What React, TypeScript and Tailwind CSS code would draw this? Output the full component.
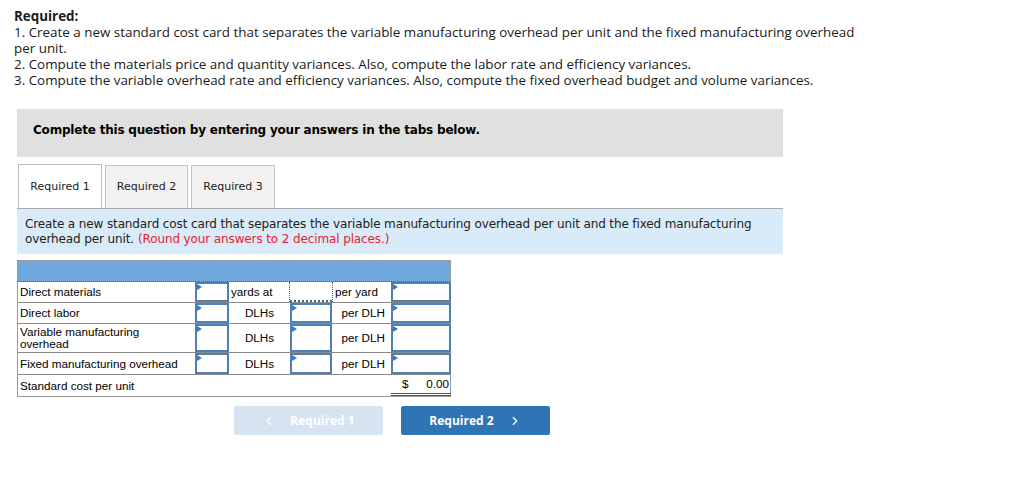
import { ChevronLeft, ChevronRight } from 'lucide-react';

const cols = 'grid grid-cols-[177px_34px_61px_42px_59px_60px]';

function InputCell() {
  return (
    <div className="relative h-full border-2 border-[#4f7fb3] bg-white">
      <svg className="absolute left-0 top-0" width="5" height="6" viewBox="0 0 5 6">
        <path d="M0 0 L5 3 L0 6 Z" fill="#3a78c2" />
      </svg>
    </div>
  );
}

const rows = [
  { label: 'Direct materials', qty: 'yards at', rate: 'per yard', h: 'h-[21px]', first: true },
  { label: 'Direct labor', qty: 'DLHs', rate: 'per DLH', h: 'h-[21px]' },
  { label: 'Variable manufacturing overhead', qty: 'DLHs', rate: 'per DLH', h: 'h-[29px]' },
  { label: 'Fixed manufacturing overhead', qty: 'DLHs', rate: 'per DLH', h: 'h-[22px]' },
];

export default function App() {
  return (
    <div className="min-h-screen w-[1024px] bg-white text-[#222]">
      <div className="px-[14px] pt-[8px] font-['Open_Sans',sans-serif] text-[13.4px] leading-[16px] text-[#1a1a1a]">
        <div className="font-bold">Required:</div>
        <div>1. Create a new standard cost card that separates the variable manufacturing overhead per unit and the fixed manufacturing overhead</div>
        <div>per unit.</div>
        <div>2. Compute the materials price and quantity variances. Also, compute the labor rate and efficiency variances.</div>
        <div>3. Compute the variable overhead rate and efficiency variances. Also, compute the fixed overhead budget and volume variances.</div>
      </div>

      <div className="ml-[17px] mt-[21px] w-[766px] font-['DejaVu_Sans',Verdana,sans-serif]">
        <div className="flex h-[48px] items-center bg-[#e0e0e0] px-[16px] pb-[6px] text-[12px] font-bold tracking-[-0.2px] text-black">
          Complete this question by entering your answers in the tabs below.
        </div>

        <div className="mt-[7px] flex items-end gap-[3px] pl-[1px] text-[11px] text-[#222]">
          <div className="flex h-[44px] w-[84px] items-center justify-center border border-b-0 border-[#bbb] bg-white pt-[1px]">Required 1</div>
          <div className="flex h-[43px] w-[83px] items-center justify-center border border-b-0 border-[#c4c4c4] bg-[#f2f2f2]">Required 2</div>
          <div className="flex h-[43px] w-[84px] items-center justify-center border border-b-0 border-[#c4c4c4] bg-[#f2f2f2]">Required 3</div>
        </div>

        <div className="h-[46px] border-t border-[#aaa] bg-[#d9ebf8] px-[8px] pt-[8px] text-[12px] leading-[15px] tracking-[-0.12px] text-[#222]">
          <div>Create a new standard cost card that separates the variable manufacturing overhead per unit and the fixed manufacturing</div>
          <div className="flex gap-[4px]">
            <span>overhead per unit.</span>
            <span className="text-[#e8212e]">(Round your answers to 2 decimal places.)</span>
          </div>
        </div>
      </div>

      <div className="ml-[17px] mt-[6px] w-[434px] border border-[#9a9a9a] font-['Liberation_Sans',Arial,sans-serif] text-[11.7px] leading-[12px] text-black">
        <div className="h-[21px] border-b border-dotted border-[#2f66a8] bg-[#6fa8dc]" />
        {rows.map((r) => (
          <div key={r.label} className={`${cols} ${r.h} border-b border-[#8a8a8a]`}>
            <div className="flex items-center pl-[2px] pr-[8px]">{r.label}</div>
            <InputCell />
            {r.first ? (
              <div className="flex items-center border-r border-dotted border-[#2f66a8] px-[2px]">{r.qty}</div>
            ) : (
              <div className="flex items-center justify-center">{r.qty}</div>
            )}
            {r.first ? (
              <div className="border-b-2 border-dotted border-[#2f66a8] bg-white" />
            ) : (
              <InputCell />
            )}
            {r.first ? (
              <div className="flex items-center border-l border-dotted border-[#2f66a8] px-[2px]">{r.rate}</div>
            ) : (
              <div className="flex items-center justify-end pr-[6px]">{r.rate}</div>
            )}
            <InputCell />
          </div>
        ))}
        <div className={`${cols} h-[21px]`}>
          <div className="col-span-5 flex items-center px-[2px]">Standard cost per unit</div>
          <div className="flex items-center justify-between border-b-[3px] border-double border-[#555] pl-[11px] pr-[2px]">
            <span>$</span>
            <span>0.00</span>
          </div>
        </div>
      </div>

      <div className="mt-[9px] flex gap-[18px] pl-[234px] font-['Open_Sans',sans-serif] text-[12px] font-bold text-white">
        <div className="flex h-[29px] w-[149px] items-center justify-center gap-[14px] rounded-[2px] bg-[#d6e4f1]">
          <ChevronLeft size={14} strokeWidth={2} />
          <span>Required 1</span>
        </div>
        <div className="flex h-[29px] w-[149px] items-center justify-center gap-[14px] rounded-[2px] bg-[#2f74b5]">
          <span>Required 2</span>
          <ChevronRight size={14} strokeWidth={2} />
        </div>
      </div>
    </div>
  );
}
